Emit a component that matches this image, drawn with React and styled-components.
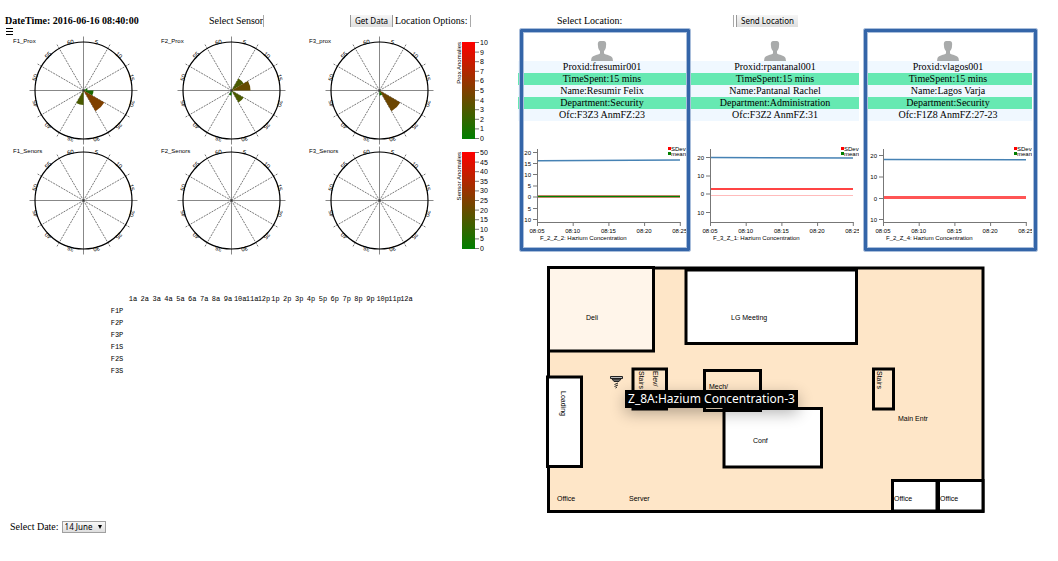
import React from "react";
import styled, { createGlobalStyle } from "styled-components";

const GlobalStyle = createGlobalStyle`
  *, *::before, *::after { box-sizing: border-box; }
  body {
    margin: 0;
    background: #fff;
    color: #000;
    font: 10px/12px "Liberation Serif", "Times New Roman", serif;
  }
`;

const Toolbar = styled.header`
  display: grid;
  grid-template-columns: 204fr 141fr 207fr 176fr 320fr;
  align-items: center;
  padding: 14px 5px 0;
  height: 27px;
  white-space: nowrap;
`;

const ToolGroup = styled.div`
  display: flex;
  align-items: center;
  gap: ${(p) => p.$gap || 0}px;
`;

const EmptySelect = styled.select`
  appearance: none;
  width: 1px;
  height: 12px;
  margin: 0;
  padding: 0;
  border: 0;
  border-left: 1px solid #a9a9a9;
  background: #fff;
`;

const Button = styled.button`
  height: 12px;
  margin: 0;
  padding: 0 4px;
  border: 0 solid #999;
  border-left-width: 1px;
  border-right-width: ${(p) => (p.$closed ? 1 : 0)}px;
  background: linear-gradient(#f6f6f6, #dedede);
  color: #000;
  font: 8px/12px "Noto Sans", sans-serif;
`;

const Main = styled.main`
  display: grid;
  grid-template-columns: 518fr 540fr;
  align-items: start;
`;

const Panel = styled.section`
  min-width: 0;
`;

const MenuButton = styled.button`
  display: block;
  height: 9px;
  margin: 0 0 0 5px;
  padding: 0;
  border: 0;
  background: none;
  svg { display: block; }
`;

const DialGrid = styled.div`
  display: grid;
  grid-template-columns: repeat(3, 148fr) 40fr;
  padding: 0 25px 0 9px;
`;

const Drawing = styled.svg`
  display: block;
  width: 100%;
  height: auto;
  font-family: "Liberation Sans", Arial, sans-serif;
  font-size: ${(p) => p.$size || 6}px;
`;

const ScaleLabel = styled.text`
  font-size: 7px;
`;

const HeatTable = styled.table`
  width: 305px;
  margin: 37px 0 0 107px;
  border-collapse: collapse;
  table-layout: fixed;
  color: #000;
  font: 7px/12px "Liberation Mono", "Courier New", monospace;
  th, td {
    height: 12px;
    padding: 0;
    font-weight: 400;
    text-align: center;
    white-space: nowrap;
  }
  tr > :first-child { width: 20px; }
`;

const DateRow = styled.div`
  display: flex;
  align-items: center;
  gap: 3px;
  margin: 144px 0 0 10px;
`;

const SelectBox = styled.div`
  position: relative;
  svg {
    position: absolute;
    right: 4px;
    top: 4px;
    pointer-events: none;
  }
`;

const DateSelect = styled.select`
  appearance: none;
  display: block;
  width: 44px;
  height: 12px;
  margin: 0;
  padding: 0 0 0 2px;
  border: 1px solid #a0a0a0;
  border-radius: 0;
  background: linear-gradient(#f8f8f8, #dedede);
  color: #000;
  font: 8px/10px "Noto Sans", sans-serif;
`;

const Cards = styled.div`
  display: grid;
  grid-template-columns: repeat(3, 1fr);
  gap: 5px;
  padding: 1px 26px 0 0;
`;

const CardBox = styled.article`
  position: relative;
  padding-top: 13px;
`;

const Highlight = styled.div`
  position: absolute;
  inset: 0 -5px 0 1px;
  border: 1px solid #a9bedb;
  border-radius: 2px;
  box-shadow: inset 0 0 0 3px #3465a8, inset 0 0 0 4px #a9bedb;
  pointer-events: none;

  ${CardBox}:last-child & {
    left: -1px;
    right: -6px;
  }
`;

const Avatar = styled.svg`
  display: block;
  width: 22px;
  height: 20px;
  margin: 0 auto;
`;

const Facts = styled.ul`
  margin: 0;
  padding: 0;
  list-style: none;
`;

const Fact = styled.li`
  height: 12px;
  text-align: center;
  white-space: nowrap;
  background: ${(p) => (p.$strong ? "#66e9b2" : "#f0f8ff")};
`;

const Plan = styled.div`
  position: relative;
  margin: 14px 73px 0 28px;
`;

const Tooltip = styled.div`
  position: absolute;
  left: 18%;
  top: 50%;
  padding: 0 3px;
  background: #000;
  color: #fff;
  font: 12px/18px "Noto Sans", sans-serif;
  white-space: nowrap;
  box-shadow: 0 5px 15px rgba(0, 0, 0, 0.3);
`;

const CX = 74.5;
const CY = 54.5;
const polar = (deg, r) => {
  const a = (deg * Math.PI) / 180;
  return [CX + r * Math.sin(a), CY - r * Math.cos(a)];
};

function Dial({ title, wedges = [] }) {
  return (
    <Drawing viewBox="0 0 148 110" role="img" aria-label={title}>
      <text x="4" y="7">{title}</text>
      {Array.from({ length: 12 }, (_, i) => {
        const [x, y] = polar(i * 30, 54);
        return (
          <line key={i} x1={CX} y1={CY} x2={x} y2={y}
            stroke={i % 3 ? "#555" : "#888"} strokeDasharray={i % 3 ? "2 1" : undefined}
            strokeWidth={i % 3 ? 0.8 : 1} />
        );
      })}
      {wedges.map(([from, r, fill]) => {
        const [x1, y1] = polar(from, r);
        const [x2, y2] = polar(from + 30, r);
        return <path key={from} d={`M${CX} ${CY}L${x1} ${y1}A${r} ${r} 0 0 1 ${x2} ${y2}Z`} fill={fill} />;
      })}
      <circle cx={CX} cy={CY} r="1" fill="#333" />
      <circle cx={CX} cy={CY} r="48.5" fill="none" stroke="#000" strokeWidth="1.2" />
      {Array.from({ length: 12 }, (_, i) => {
        const deg = 15 + i * 30;
        return (
          <text key={deg} x={CX} y={CY - 48} textAnchor="middle" transform={`rotate(${deg} ${CX} ${CY})`}>
            {(i + 1) * 5}
          </text>
        );
      })}
    </Drawing>
  );
}

function Scale({ id, title, max }) {
  return (
    <Drawing viewBox="0 0 40 110" role="img" aria-label={title}>
      <defs>
        <linearGradient id={id} x1="0" y1="0" x2="0" y2="1">
          <stop offset="0" stopColor="#f00" />
          <stop offset="1" stopColor="#008000" />
        </linearGradient>
      </defs>
      <rect x="9" y="6" width="13" height="97" fill={`url(#${id})`} />
      <text transform="translate(8 6) rotate(-90)" textAnchor="end">{title}</text>
      {Array.from({ length: 11 }, (_, i) => {
        const y = 6.5 + i * 9.6;
        return (
          <g key={i}>
            <line x1="22" x2="26" y1={y} y2={y} stroke="#777" />
            <ScaleLabel x="27" y={y + 2.5}>{max - (i * max) / 10}</ScaleLabel>
          </g>
        );
      })}
    </Drawing>
  );
}

const TIMES = ["08:05", "08:10", "08:15", "08:20", "08:25"];

function LineChart({ caption, ticks, lines }) {
  return (
    <Drawing viewBox="0 0 168 131" role="img" aria-label={caption}>
      <path d="M19.5 28V101.5H162.5" fill="none" stroke="#777" />
      {ticks.map(([y, label]) => (
        <g key={y}>
          <line x1="15" x2="19" y1={y} y2={y} stroke="#777" />
          <text x="13" y={y + 2} textAnchor="end">{label}</text>
        </g>
      ))}
      {TIMES.map((t, i) => (
        <g key={t}>
          <line x1={19.5 + i * 35.7} x2={19.5 + i * 35.7} y1="101" y2="105" stroke="#777" />
          <text x={19 + i * 35.7} y="112" textAnchor="middle">{t}</text>
        </g>
      ))}
      {lines.map(([y1, y2, color, width], i) => (
        <line key={i} x1="20" x2="162" y1={y1} y2={y2} stroke={color} strokeWidth={width} />
      ))}
      <rect x="150" y="26" width="3" height="3" fill="#f00" />
      <text x="153" y="30">SDev</text>
      <rect x="150" y="31" width="3" height="3" fill="#008000" />
      <text x="153" y="35">mean</text>
      <text x="22" y="119">{caption}</text>
    </Drawing>
  );
}

const PEOPLE = [
  {
    facts: ["Proxid:fresumir001", "TimeSpent:15 mins", "Name:Resumir Felix", "Department:Security", "Ofc:F3Z3 AnmFZ:23"],
    active: true,
    caption: "F_2_Z_2: Hazium Concentration",
    ticks: [[31.5, 20], [42.5, 15], [53.5, 10], [65, 5], [76, 0], [87.5, 5], [98.5, 10]],
    lines: [[39.8, 39, "#4682b4", 1.5], [75.5, 75.5, "#f88", 3], [75.5, 75.5, "#008000", 1.5]],
  },
  {
    facts: ["Proxid:rpantanal001", "TimeSpent:15 mins", "Name:Pantanal Rachel", "Department:Administration", "Ofc:F3Z2 AnmFZ:31"],
    caption: "F_3_Z_1: Hazium Concentration",
    ticks: [[36.5, 20], [55, 10], [73, 0], [91.5, 10]],
    lines: [[36.5, 37, "#4682b4", 1.5], [74.5, 74.5, "#fbb", 1], [68, 68, "#f44", 2]],
  },
  {
    facts: ["Proxid:vlagos001", "TimeSpent:15 mins", "Name:Lagos Varja", "Department:Security", "Ofc:F1Z8 AnmFZ:27-23"],
    active: true,
    caption: "F_2_Z_4: Hazium Concentration",
    ticks: [[34.5, 20], [56, 10], [77.5, 0], [98.5, 10]],
    lines: [[38.4, 38.7, "#4682b4", 1.5], [76.5, 76.5, "#f55", 3]],
  },
];

function PersonCard({ person }) {
  return (
    <CardBox>
      <Avatar viewBox="0 0 22 20" aria-hidden="true">
        <path fill="#a9abab" d="M9 0H13C15 0.500 15.500 2 15 5C15 7.500 14 9 13 10V12.500C15 14 20 14 21.500 17L22 20H0L0.500 17C2 14 7 14 9 12.500V10C8 9 7 7.500 7 5C6.500 2 7 0.500 9 0Z" />
      </Avatar>
      <Facts>
        {person.facts.map((f, i) => (
          <Fact key={f} $strong={i % 2 === 1}>{f}</Fact>
        ))}
      </Facts>
      <LineChart caption={person.caption} ticks={person.ticks} lines={person.lines} />
      {person.active && <Highlight />}
    </CardBox>
  );
}

const ROOMS = [
  [548.5, 268, 434.5, 243.5, "#fee6c8"],
  [548.5, 267.5, 105, 83.5, "#fff5ea"],
  [686, 270, 170.5, 73.5, "#fff"],
  [633, 369, 33.5, 40, "none"],
  [724, 408.5, 97.5, 58.5, "#fff"],
  [704.5, 370.5, 56, 40, "none"],
  [547.5, 377, 34, 89.5, "#fff"],
  [873.5, 369, 20, 40, "none"],
  [892.5, 480.5, 44.5, 30.5, "#fff"],
  [938.5, 480.5, 44.5, 30.5, "#fff"],
];

const ROOM_NAMES = [
  ["Deli", 586, 320], ["LG Meeting", 731, 320], ["Conf", 753, 443], ["Office", 557, 501],
  ["Server", 629, 501], ["Office", 894, 501], ["Office", 940, 501], ["Main Entr", 898, 421],
  ["Mech/", 709, 389],
  ["Loading", 561, 391, 90], ["Stairs", 639, 371, 90], ["Elev/", 653, 371, 90], ["Stairs", 877, 371, 90],
];

function FloorPlan() {
  return (
    <Plan>
      <Drawing $size={7} viewBox="546 266 439 247" role="img" aria-label="Floor plan">
        {ROOMS.map(([x, y, w, h, fill], i) => (
          <rect key={i} x={x} y={y} width={w} height={h} fill={fill} stroke="#000" strokeWidth="3" />
        ))}
        {ROOM_NAMES.map(([name, x, y, turn = 0], i) => (
          <text key={i} transform={`translate(${x} ${y}) rotate(${turn})`}>{name}</text>
        ))}
        <g stroke="#222" fill="none">
          <path d="M610.500 376.500H622.500V378.500H610.500Z" fill="#bbb" />
          <path d="M612 379L614 381.500H619L621 379Z" fill="#666" />
          <path d="M614.500 384.500L618 383M614.500 386.500L618 385M615.500 388L617 387" />
        </g>
      </Drawing>
      <Tooltip role="tooltip">Z_8A:Hazium Concentration-3</Tooltip>
    </Plan>
  );
}

const HOURS = ["a", "p"].flatMap((half) =>
  Array.from({ length: 12 }, (_, i) => `${i + 1}${i === 11 ? (half === "a" ? "p" : "a") : half}`)
);
const ZONES = ["F1P", "F2P", "F3P", "F1S", "F2S", "F3S"];

export default function App() {
  return (
    <>
      <GlobalStyle />
      <Toolbar>
        <strong>DateTime: 2016-06-16 08:40:00</strong>
        <ToolGroup>
          <label htmlFor="sensor">Select Sensor</label>
          <EmptySelect id="sensor" />
        </ToolGroup>
        <ToolGroup $gap={2}>
          <Button type="button" $closed>Get Data</Button>
          <label htmlFor="options">Location Options:</label>
          <EmptySelect id="options" />
        </ToolGroup>
        <label htmlFor="location">Select Location:</label>
        <ToolGroup $gap={2}>
          <EmptySelect id="location" />
          <Button type="button">Send Location</Button>
        </ToolGroup>
      </Toolbar>
      <Main>
        <Panel>
          <MenuButton type="button" aria-label="Menu">
            <svg width="9" height="9" viewBox="0 0 9 9">
              <path d="M1 1.500H8M1 4.500H8M1 7.500H8" stroke="#000" />
            </svg>
          </MenuButton>
          <DialGrid>
            <Dial title="F1_Prox" wedges={[[60, 4, "#0d7000"], [90, 10, "#1c6800"], [120, 24, "#7f4000"], [180, 14.5, "#4a5a00"]]} />
            <Dial title="F2_Prox" wedges={[[30, 14, "#4a5a00"], [60, 19, "#664c00"], [120, 14, "#4a5a00"], [180, 5, "#0d7000"]]} />
            <Dial title="F3_prox" wedges={[[120, 24, "#6b4500"], [150, 5, "#0d7000"]]} />
            <Scale id="proxScale" title="Prox Anomalies" max={10} />
            <Dial title="F1_Senors" />
            <Dial title="F2_Senors" />
            <Dial title="F3_Senors" />
            <Scale id="sensorScale" title="Sensor Anomalies" max={50} />
          </DialGrid>
          <HeatTable>
            <thead>
              <tr>
                <td />
                {HOURS.map((h) => <th key={h} scope="col">{h}</th>)}
              </tr>
            </thead>
            <tbody>
              {ZONES.map((z) => (
                <tr key={z}>
                  <th scope="row">{z}</th>
                  {HOURS.map((h) => <td key={h} />)}
                </tr>
              ))}
            </tbody>
          </HeatTable>
          <DateRow>
            <label htmlFor="date">Select Date:</label>
            <SelectBox>
              <DateSelect id="date" defaultValue="14 June">
                <option>14 June</option>
              </DateSelect>
              <svg width="4" height="4" viewBox="0 0 4 4" aria-hidden="true"><path d="M0 0H4L2 4Z" /></svg>
            </SelectBox>
          </DateRow>
        </Panel>
        <Panel>
          <Cards>
            {PEOPLE.map((p) => <PersonCard key={p.caption} person={p} />)}
          </Cards>
          <FloorPlan />
        </Panel>
      </Main>
    </>
  );
}
